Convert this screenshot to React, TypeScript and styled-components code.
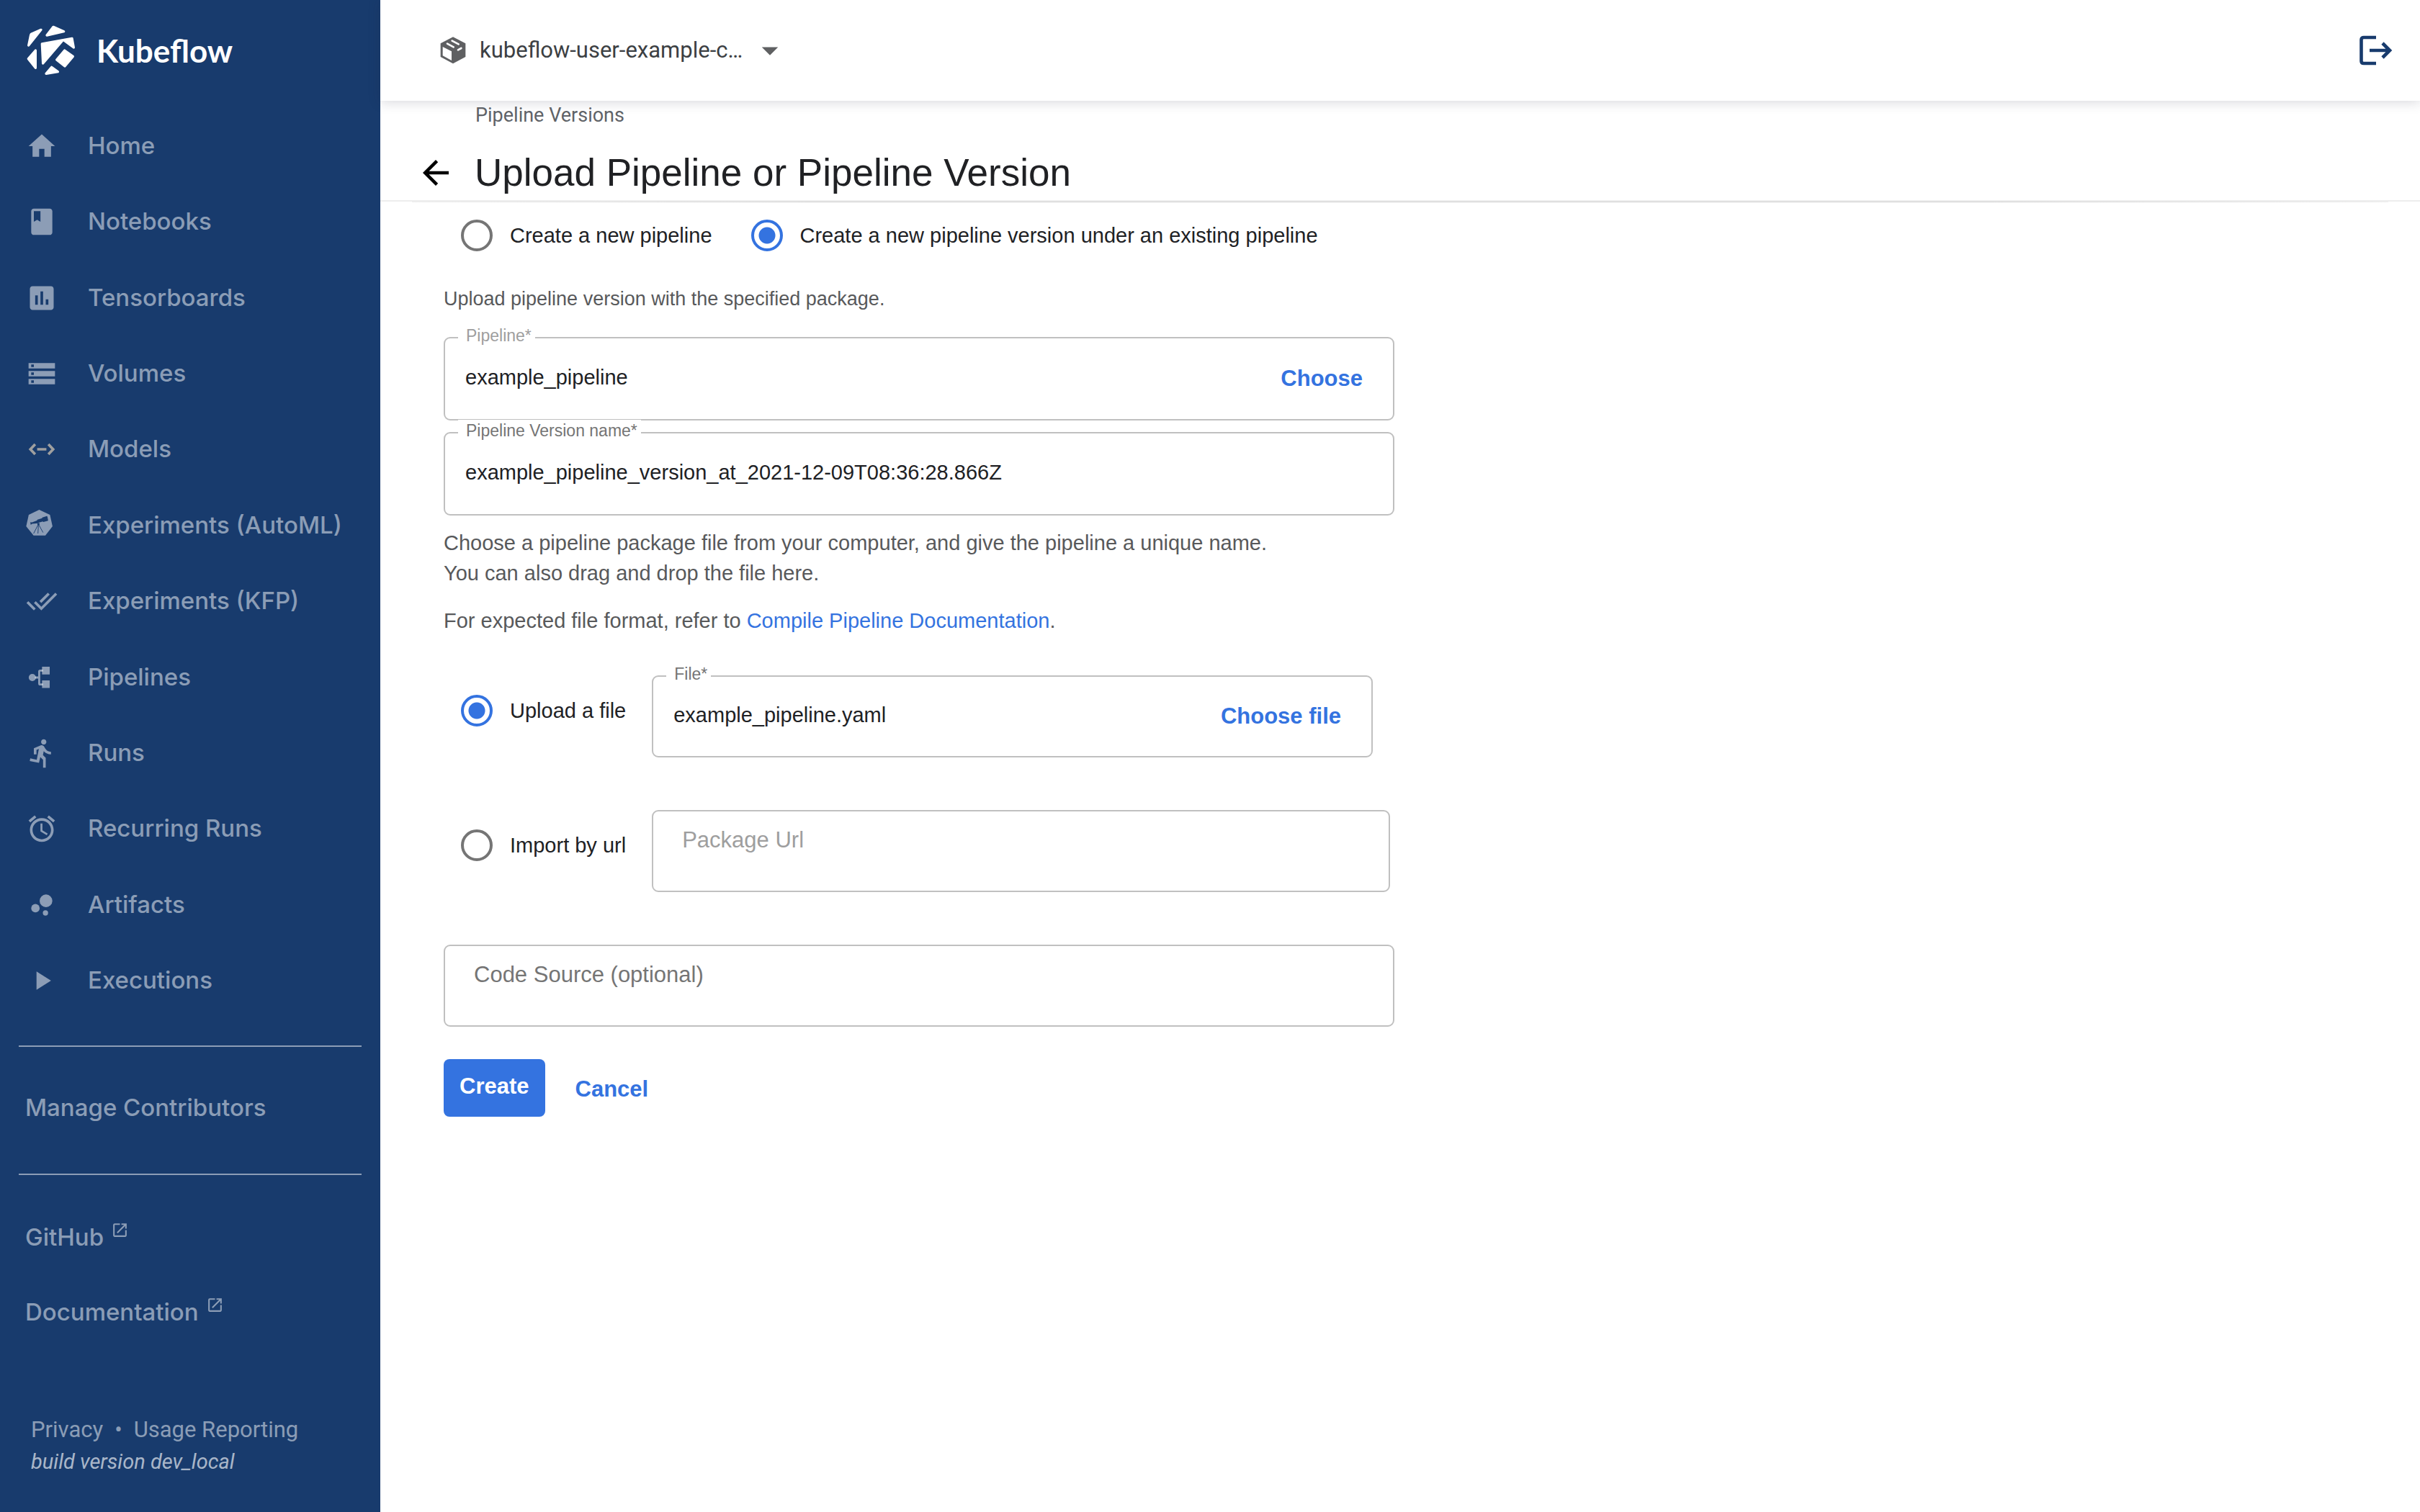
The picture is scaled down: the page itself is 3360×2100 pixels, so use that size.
import React, { useState } from "react";
import styled, { createGlobalStyle } from "styled-components";

const color = {
  navy: "#183b6d",
  blue: "#3473e0",
  ink: "#202124",
  body: "#58595b",
  muted: "#757575",
  disabled: "#9e9e9e",
  line: "#c0c0c0",
};

const GlobalStyle = createGlobalStyle`
  *, *::before, *::after { box-sizing: border-box; }
  body { margin: 0; background: #fff; color: ${color.ink}; font-family: "Liberation Sans", Arial, sans-serif; }
  ul, p, h1 { margin: 0; padding: 0; }
  ul { list-style: none; }
  a { text-decoration: none; color: inherit; }
  button, input, select { font: inherit; color: inherit; margin: 0; }
  button { background: none; border: 0; padding: 0; cursor: pointer; }
  svg { display: block; flex: none; }
`;

const Shell = styled.div`
  display: flex;
  min-height: 100vh;
`;

/* ---------- Sidebar ---------- */

const Sidebar = styled.aside`
  flex: none;
  width: 528px;
  display: flex;
  flex-direction: column;
  background: ${color.navy};
  color: rgba(255, 255, 255, 0.5);
  font: 500 33px/44px Inter, sans-serif;
`;

const Brand = styled.a`
  display: flex;
  align-items: center;
  gap: 28px;
  height: 140px;
  margin-bottom: 10px;
  padding-left: 36px;
  color: #fff;
  font-family: Lato, sans-serif;
  font-size: 44px;
  font-weight: 700;
`;

const NavList = styled.ul`
  display: grid;
  grid-auto-rows: 1fr;
  min-height: 1265px;
`;

const NavLink = styled.a`
  display: flex;
  align-items: center;
  gap: 42px;
  height: 100%;
  padding-left: 36px;
`;

const NavLabel = styled.span`
  padding-bottom: 2px;
`;

const Contributors = styled.a`
  display: flex;
  align-items: center;
  height: 180px;
  margin: 37px 26px 34px;
  padding: 0 9px 8px;
  border: solid rgba(255, 255, 255, 0.5);
  border-width: 2px 0;
`;

const ExternalLink = styled.a`
  display: flex;
  align-items: center;
  gap: 10px;
  height: 104px;
  padding-left: 35px;

  svg {
    margin-bottom: 20px;
  }
`;

const Legal = styled.footer`
  margin-top: auto;
  padding: 0 43px 48px;
  font: 400 31px/44px Roboto, sans-serif;
`;

const LegalLinks = styled.div`
  display: flex;
  gap: 16px;
`;

const Build = styled.div`
  font-size: 29px;
  font-style: italic;
  color: rgba(255, 255, 255, 0.65);
`;

/* ---------- Top bar and page header ---------- */

const Content = styled.div`
  flex: 1;
  min-width: 0;
`;

const TopBar = styled.header`
  position: relative;
  display: flex;
  align-items: center;
  justify-content: space-between;
  height: 140px;
  padding: 0 38px 0 83px;
  background: #fff;
  box-shadow: 0 2px 16px rgba(32, 33, 60, 0.18);
`;

const Namespace = styled.label`
  display: flex;
  align-items: center;
  gap: 10px;
  font: 400 31px/44px Roboto, sans-serif;
  color: #3c4043;

  select {
    appearance: none;
    border: 0;
    padding: 0 0 0 9px;
    background: none;
  }
`;

const PageHeader = styled.div`
  position: relative;
  height: 140px;
  padding: 0 50px;
  border-bottom: 2px solid #ededed;

  &::after {
    content: "";
    position: absolute;
    left: 44px;
    right: 44px;
    bottom: -3px;
    height: 1px;
    background: linear-gradient(to right, #eee, #cfcfcf 20%, #cfcfcf 80%, #eee);
  }
`;

const Crumb = styled.a`
  display: block;
  padding: 2px 0 0 82px;
  font: 400 27px/36px Roboto, sans-serif;
  color: #5f6368;
`;

const TitleRow = styled.div`
  display: flex;
  align-items: center;
  gap: 27px;
  padding-top: 32px;
`;

const Title = styled.h1`
  font-size: 53px;
  font-weight: 400;
  line-height: 60px;
`;

/* ---------- Form ---------- */

const Form = styled.form`
  max-width: 1408px;
  padding: 1px 0 0 88px;
  font-size: 29px;
  line-height: 42px;
`;

const Choices = styled.div`
  display: flex;
  align-items: center;
  gap: 54px;
  height: 92px;
  padding-left: 24px;
`;

const RadioLabel = styled.label`
  display: flex;
  align-items: center;
  gap: 24px;
  white-space: nowrap;
`;

const Radio = styled.input.attrs({ type: "radio" })`
  appearance: none;
  width: 44px;
  height: 44px;
  border: 4px solid ${color.muted};
  border-radius: 50%;

  &:checked {
    border-color: ${color.blue};
    background: radial-gradient(circle, ${color.blue} 11px, transparent 12px);
  }
`;

const Text = styled.p<{ $small?: boolean }>`
  margin: 17px 0 24px;
  font-size: ${(p) => (p.$small ? 27 : 29)}px;
  color: ${color.body};

  a {
    color: ${color.blue};
  }
`;

const Intro = styled(Text)`
  margin: 21px 0 32px;
`;

const Fields = styled.div`
  display: grid;
  gap: 16px;
`;

const Box = styled.div<{ $tall?: boolean }>`
  position: relative;
  flex: 1;
  display: flex;
  align-items: center;
  height: ${(p) => (p.$tall ? 116 : 114)}px;
  padding: 0 42px 0 28px;
  border: 2px solid ${color.line};
  border-radius: 9px;

  input {
    flex: 1;
    min-width: 0;
    height: 100%;
    padding: 0 0 4px;
    border: 0;
    outline: 0;
    background: none;
  }
`;

const Floating = styled.label<{ $disabled?: boolean }>`
  position: absolute;
  left: 18px;
  top: -19px;
  padding: 0 5px 0 11px;
  background: #fff;
  font-size: 23px;
  line-height: 30px;
  color: ${(p) => (p.$disabled ? color.disabled : color.muted)};
`;

const PlainBox = styled(Box)`
  input {
    padding: 0 12px 30px;
    font-size: 31px;
  }

  input::placeholder {
    color: ${color.muted};
    opacity: 1;
  }

  input:disabled::placeholder {
    color: ${color.disabled};
  }
`;

const TextButton = styled.button`
  font-size: 31px;
  font-weight: 700;
  color: ${color.blue};
`;

const SourceRow = styled.div<{ $inset: number }>`
  display: flex;
  gap: 36px;
  margin-bottom: 73px;
  padding: 0 ${(p) => p.$inset}px 0 24px;

  ${RadioLabel} {
    padding-bottom: 16px;
  }
`;

const Sources = styled.div`
  padding-top: 31px;
`;

const Actions = styled.div`
  display: flex;
  align-items: flex-end;
  gap: 42px;
  padding-top: 45px;

  ${TextButton} {
    height: 76px;
  }
`;

const CreateButton = styled.button`
  height: 80px;
  padding: 0 22px 4px;
  border-radius: 8px;
  background: ${color.blue};
  color: #fff;
  font-size: 31px;
  font-weight: 700;
`;

/* ---------- Icons ---------- */

const Glyph = ({ d, size = 44, fill = "currentColor" }: { d: string; size?: number; fill?: string }) => (
  <svg width={size} height={size} viewBox="0 0 24 24" fill={fill} aria-hidden="true">
    <path d={d} />
  </svg>
);

const Logo = () => (
  <svg width="70" height="72" viewBox="20 16 210 216" fill="#fff" stroke="#fff" strokeWidth="10" strokeLinejoin="round" aria-hidden="true">
    <path d="M134 26 178 45 107 61Z" />
    <path d="M83 38 44 55Q41 57 40 60L31 103Z" />
    <path d="M60 124 30 159 60 197Z" />
    <path d="M87 97 212 74 219 112 178 82Q175 80 172 83L91 178Z" />
    <path d="M181 124 216 149 182 190 148 163Z" />
    <path d="M127 194 153 213 104 221Z" />
  </svg>
);

const ModelsIcon = () => (
  <svg width="44" height="44" viewBox="0 0 24 24" fill="none" stroke="#9f9f9f" strokeWidth="2" aria-hidden="true">
    <path d="M7 8.2 3.4 12 7 15.8M17 8.2 20.6 12 17 15.8M8.5 12h7" />
  </svg>
);

const TelescopeIcon = () => (
  <svg width="44" height="44" viewBox="100 414 124 124" aria-hidden="true">
    <path fill="currentColor" d="M152 414 194 434 204 479 176 515H130L101 479 111 434Z" />
    <g fill={color.navy}>
      <path d="M117 464 120 462 122 464 143 456 145 453 163 447 164 444 182 439 184 441 187 456 184 458 168 462 166 460 149 465 147 467 124 469 119 473Z" />
      <path d="M145 466h8v7h-8z" />
    </g>
    <path d="M148 472 130 507M149 472 147 507M150 472 167 503" stroke={color.navy} strokeWidth="2.5" fill="none" />
  </svg>
);

const PipelineIcon = () => (
  <svg width="44" height="44" viewBox="100 1002 124 124" fill="currentColor" aria-hidden="true">
    <circle cx="125" cy="1064" r="14" />
    <path d="M163 1022h30v30h-30zM163 1075h30v30h-30z" />
    <path d="M135 1064H152M167 1037H156Q152 1037 152 1041V1087Q152 1091 156 1091H167" fill="none" stroke="currentColor" strokeWidth="8" />
  </svg>
);

const BubbleIcon = () => (
  <svg width="44" height="44" viewBox="0 0 24 24" fill="currentColor" aria-hidden="true">
    <circle cx="7.2" cy="14.4" r="3.2" />
    <circle cx="14.8" cy="18" r="2" />
    <circle cx="15.2" cy="8.8" r="4.8" />
  </svg>
);

const PackageIcon = () => (
  <svg width="36" height="38" viewBox="34 34 108 114" aria-hidden="true">
    <path fill="#5f6062" d="M88 35 140 62V118L88 146 36 118V62Z" />
    <path fill="#fff" d="M45 76 82 95V133L45 113Z" />
    <path d="M64 63 90 77M84 51 111 65M109 89 122 82" stroke="#fff" strokeWidth="8" strokeLinecap="round" />
  </svg>
);

const LogoutIcon = () => (
  <svg width="46" height="42" viewBox="0 0 46 42" fill="none" stroke={color.navy} strokeWidth="4.6" aria-hidden="true">
    <path d="M23 3H6Q2.5 3 2.5 6V36Q2.5 39 6 39H23M14 21H42M32 11 42 21 32 31" />
  </svg>
);

const path = {
  home: "M10 20v-6h4v6h5v-8h3L12 3 2 12h3v8z",
  book: "M18 2H6c-1.1 0-2 .9-2 2v16c0 1.1.9 2 2 2h12c1.1 0 2-.9 2-2V4c0-1.1-.9-2-2-2zM6 4h5v8l-2.5-1.5L6 12V4z",
  chart: "M19 3H5c-1.1 0-2 .9-2 2v14c0 1.1.9 2 2 2h14c1.1 0 2-.9 2-2V5c0-1.1-.9-2-2-2zM9 17H7v-7h2v7zm4 0h-2V7h2v10zm4 0h-2v-4h2v4z",
  storage: "M2 20h20v-4H2v4zm2-3h2v2H4v-2zM2 4v4h20V4H2zm4 3H4V5h2v2zm-4 7h20v-4H2v4zm2-3h2v2H4v-2z",
  doneAll:
    "M18 7l-1.41-1.41-6.34 6.34 1.41 1.41L18 7zm4.24-1.41L11.66 16.17 7.48 12l-1.41 1.41L11.66 19l12-12-1.42-1.41zM.41 13.41L6 19l1.41-1.41L1.83 12 .41 13.41z",
  run: "M13.49 5.48c1.1 0 2-.9 2-2s-.9-2-2-2-2 .9-2 2 .9 2 2 2zm-3.6 13.9l1-4.4 2.1 2v6h2v-7.5l-2.1-2 .6-3c1.3 1.5 3.3 2.5 5.5 2.5v-2c-1.9 0-3.5-1-4.3-2.4l-1-1.6c-.4-.6-1-1-1.7-1-.3 0-.5.1-.8.1l-5.2 2.2v4.7h2v-3.4l1.8-.7-1.6 8.1-4.9-1-.4 2 7 1.4z",
  alarm:
    "M22 5.72l-4.6-3.86-1.29 1.53 4.6 3.86L22 5.72zM7.88 3.39L6.6 1.86 2 5.71l1.29 1.53 4.59-3.85zM12.5 8H11v6l4.75 2.85.75-1.23-4-2.37V8zM12 4c-4.97 0-9 4.03-9 9s4.02 9 9 9c4.97 0 9-4.03 9-9s-4.03-9-9-9zm0 16c-3.87 0-7-3.13-7-7s3.13-7 7-7 7 3.13 7 7-3.13 7-7 7z",
  play: "M8 5v14l11-7z",
  open: "M19 19H5V5h7V3H5a2 2 0 0 0-2 2v14c0 1.1.89 2 2 2h14c1.1 0 2-.9 2-2v-7h-2v7zM14 3v2h3.59l-9.83 9.83 1.41 1.41L19 6.41V10h2V3h-7z",
  back: "M20 11H7.83l5.59-5.59L12 4l-8 8 8 8 1.41-1.41L7.83 13H20v-2z",
  caret: "M7 10l5 5 5-5z",
};

const navItems = [
  { label: "Home", icon: <Glyph d={path.home} /> },
  { label: "Notebooks", icon: <Glyph d={path.book} /> },
  { label: "Tensorboards", icon: <Glyph d={path.chart} /> },
  { label: "Volumes", icon: <Glyph d={path.storage} /> },
  { label: "Models", icon: <ModelsIcon /> },
  { label: "Experiments (AutoML)", icon: <TelescopeIcon /> },
  { label: "Experiments (KFP)", icon: <Glyph d={path.doneAll} /> },
  { label: "Pipelines", icon: <PipelineIcon /> },
  { label: "Runs", icon: <Glyph d={path.run} /> },
  { label: "Recurring Runs", icon: <Glyph d={path.alarm} /> },
  { label: "Artifacts", icon: <BubbleIcon /> },
  { label: "Executions", icon: <Glyph d={path.play} /> },
];

export default function App() {
  const [target, setTarget] = useState("version");
  const [source, setSource] = useState("file");
  const [version, setVersion] = useState("example_pipeline_version_at_2021-12-09T08:36:28.866Z");

  return (
    <Shell>
      <GlobalStyle />
      <Sidebar>
        <Brand href="#">
          <Logo />
          Kubeflow
        </Brand>
        <nav>
          <NavList>
            {navItems.map((item) => (
              <li key={item.label}>
                <NavLink href="#">
                  {item.icon}
                  <NavLabel>{item.label}</NavLabel>
                </NavLink>
              </li>
            ))}
          </NavList>
          <Contributors href="#">Manage Contributors</Contributors>
          {["GitHub", "Documentation"].map((name) => (
            <ExternalLink href="#" key={name}>
              {name}
              <Glyph d={path.open} size={25} />
            </ExternalLink>
          ))}
        </nav>
        <Legal>
          <LegalLinks>
            <a href="#">Privacy</a>
            <span>•</span>
            <a href="#">Usage Reporting</a>
          </LegalLinks>
          <Build>build version dev_local</Build>
        </Legal>
      </Sidebar>

      <Content>
        <TopBar>
          <Namespace>
            <PackageIcon />
            <select aria-label="Namespace">
              <option>kubeflow-user-example-c…</option>
            </select>
            <Glyph d={path.caret} size={54} fill="#5f6062" />
          </Namespace>
          <button type="button" aria-label="Log out">
            <LogoutIcon />
          </button>
        </TopBar>

        <main>
          <PageHeader>
            <Crumb href="#">Pipeline Versions</Crumb>
            <TitleRow>
              <button type="button" aria-label="Back">
                <Glyph d={path.back} size={54} fill="#000" />
              </button>
              <Title>Upload Pipeline or Pipeline Version</Title>
            </TitleRow>
          </PageHeader>

          <Form onSubmit={(e) => e.preventDefault()}>
            <Choices>
              <RadioLabel>
                <Radio name="target" checked={target === "pipeline"} onChange={() => setTarget("pipeline")} />
                Create a new pipeline
              </RadioLabel>
              <RadioLabel>
                <Radio name="target" checked={target === "version"} onChange={() => setTarget("version")} />
                Create a new pipeline version under an existing pipeline
              </RadioLabel>
            </Choices>

            <Intro $small>Upload pipeline version with the specified package.</Intro>

            <Fields>
              <Box $tall>
                <Floating htmlFor="pipeline" $disabled>
                  Pipeline*
                </Floating>
                <input id="pipeline" type="text" value="example_pipeline" readOnly />
                <TextButton type="button">Choose</TextButton>
              </Box>
              <Box $tall>
                <Floating htmlFor="version">Pipeline Version name*</Floating>
                <input id="version" type="text" value={version} onChange={(e) => setVersion(e.target.value)} />
              </Box>
            </Fields>

            <Text>
              Choose a pipeline package file from your computer, and give the pipeline a unique name.
              <br />
              You can also drag and drop the file here.
            </Text>
            <Text>
              For expected file format, refer to <a href="#">Compile Pipeline Documentation</a>.
            </Text>

            <Sources>
              <SourceRow $inset={30}>
                <RadioLabel>
                  <Radio name="source" checked={source === "file"} onChange={() => setSource("file")} />
                  Upload a file
                </RadioLabel>
                <Box>
                  <Floating htmlFor="file">File*</Floating>
                  <input id="file" type="text" value="example_pipeline.yaml" readOnly />
                  <TextButton type="button">Choose file</TextButton>
                </Box>
              </SourceRow>
              <SourceRow $inset={6}>
                <RadioLabel>
                  <Radio name="source" checked={source === "url"} onChange={() => setSource("url")} />
                  Import by url
                </RadioLabel>
                <PlainBox>
                  <input type="text" aria-label="Package Url" placeholder="Package Url" disabled={source !== "url"} />
                </PlainBox>
              </SourceRow>
            </Sources>

            <PlainBox>
              <input type="text" aria-label="Code Source (optional)" placeholder="Code Source (optional)" />
            </PlainBox>

            <Actions>
              <CreateButton type="submit">Create</CreateButton>
              <TextButton type="button">Cancel</TextButton>
            </Actions>
          </Form>
        </main>
      </Content>
    </Shell>
  );
}
